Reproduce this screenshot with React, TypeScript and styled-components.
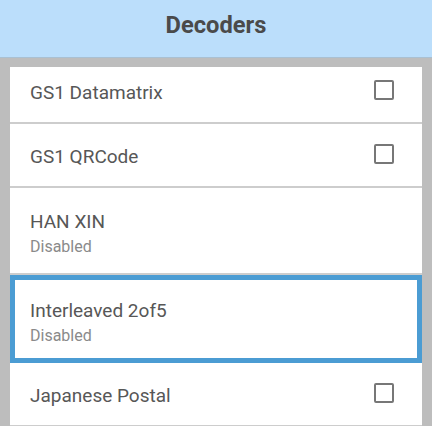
import React from "react";
import styled, { createGlobalStyle } from "styled-components";

const Global = createGlobalStyle`
  html, body { margin: 0; padding: 0; }
  body { font-family: Roboto, "Noto Sans", Arial, sans-serif; background: #bdbdbd; overflow: hidden; }
`;

const Screen = styled.div`
  display: flex;
  flex-direction: column;
  height: 426px;
  overflow: hidden;
  background: #bdbdbd;
`;

const Header = styled.header`
  flex: 0 0 auto;
  height: 58px;
  display: flex;
  align-items: center;
  justify-content: center;
  padding-bottom: 7px;
  box-sizing: border-box;
  background: #bbdefb;
  border-bottom: 1px solid #a9c0d2;
  color: #4a4a4a;
  font-size: 23.7px;
  font-weight: 700;
`;

const Body = styled.main`
  flex: 1 1 auto;
  padding: 9px 10px 0;
  min-height: 0;
`;

const Viewport = styled.div`
  height: 100%;
  overflow: hidden;
`;

const List = styled.ul`
  list-style: none;
  margin: -7px 0 0;
  padding: 0;
  display: flex;
  flex-direction: column;
`;

const Row = styled.li<{ $h: number; $focused?: boolean }>`
  box-sizing: border-box;
  height: ${(p) => p.$h}px;
  flex: 0 0 auto;
  display: flex;
  align-items: center;
  justify-content: space-between;
  background: #ffffff;
  padding: 0 28px 0 ${(p) => (p.$focused ? 15 : 20)}px;
  border: ${(p) => (p.$focused ? "5px solid #4b9cd3" : "none")};
  border-bottom: ${(p) => (p.$focused ? "5px solid #4b9cd3" : "2px solid #cdcdcd")};
`;

const TextBlock = styled.div<{ $pt: number }>`
  display: flex;
  flex-direction: column;
  padding-top: ${(p) => p.$pt}px;
`;

const Title = styled.span`
  font-size: 19px;
  line-height: 24px;
  color: #575757;
`;

const Sub = styled.span`
  font-size: 16px;
  line-height: 25px;
  color: #8a8a8a;
`;

const Box = styled.span`
  box-sizing: border-box;
  width: 20px;
  height: 20px;
  border: 2.5px solid #777777;
  border-radius: 2px;
  flex: 0 0 auto;
  margin-bottom: 2px;
`;

type Item = { name: string; sub?: string; check?: boolean; h: number; focused?: boolean };

const items: Item[] = [
  { name: "GS1 Datamatrix", check: true, h: 64 },
  { name: "GS1 QRCode", check: true, h: 64 },
  { name: "HAN XIN", sub: "Disabled", h: 87 },
  { name: "Interleaved 2of5", sub: "Disabled", h: 88, focused: true },
  { name: "Japanese Postal", check: true, h: 64 },
];

export default function App() {
  return (
    <>
      <Global />
      <Screen>
        <Header>Decoders</Header>
        <Body>
          <Viewport>
            <List>
              {items.map((it) => (
                <Row key={it.name} $h={it.h} $focused={it.focused}>
                  <TextBlock $pt={it.sub ? 8 : 3}>
                    <Title>{it.name}</Title>
                    {it.sub && <Sub>{it.sub}</Sub>}
                  </TextBlock>
                  {it.check && <Box />}
                </Row>
              ))}
            </List>
          </Viewport>
        </Body>
      </Screen>
    </>
  );
}
